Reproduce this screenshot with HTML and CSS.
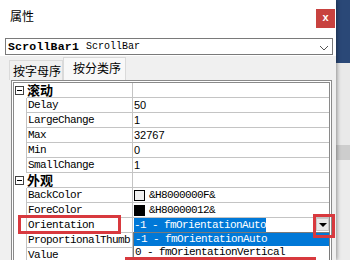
FILE: index.html
```html
<!DOCTYPE html>
<html lang="zh-CN">
<head>
	<meta charset="UTF-8">
	<title>属性</title>
	<link rel="stylesheet" href="styles.css">
</head>
<body>
	<div class="win">
		<div class="titlebar">
			<span class="title">属性</span>
			<span class="close">x</span>
		</div>
		<div class="objbar">
			<div class="combo">
				<b>ScrollBar1</b><span class="type">ScrollBar</span>
				<svg class="chev" width="10" height="6" viewBox="0 0 10 6"><path d="M1 1 L5 5 L9 1" fill="none" stroke="#555" stroke-width="1"/></svg>
			</div>
		</div>
		<div class="tabs">
			<div class="tab">按字母序</div>
			<div class="tab active">按分类序</div>
		</div>
		<!-- 属性列表 -->
		<div class="grid">
			<div class="row cat"><div class="mg"><span class="tog"></span></div><div class="nm">滚动</div><div class="vl"></div></div>
			<div class="row"><div class="mg"></div><div class="nm">Delay</div><div class="vl">50</div></div>
			<div class="row"><div class="mg"></div><div class="nm">LargeChange</div><div class="vl">1</div></div>
			<div class="row"><div class="mg"></div><div class="nm">Max</div><div class="vl">32767</div></div>
			<div class="row"><div class="mg"></div><div class="nm">Min</div><div class="vl">0</div></div>
			<div class="row"><div class="mg"></div><div class="nm">SmallChange</div><div class="vl">1</div></div>
			<div class="row cat"><div class="mg"><span class="tog"></span></div><div class="nm">外观</div><div class="vl"></div></div>
			<div class="row"><div class="mg"></div><div class="nm">BackColor</div><div class="vl mono"><span class="swatch"></span>&amp;H8000000F&amp;</div></div>
			<div class="row"><div class="mg"></div><div class="nm">ForeColor</div><div class="vl mono"><span class="swatch dark"></span>&amp;H80000012&amp;</div></div>
			<div class="row"><div class="mg"></div><div class="nm">Orientation</div>
				<div class="vl mono edit">
					<span class="sel">-1 - fmOrientationAuto</span>
					<span class="dropbtn"></span>
					<div class="droplist">
						<div class="item sel">-1 - fmOrientationAuto</div>
						<div class="item">0 - fmOrientationVertical</div>
						<div class="item">1 - fmOrientationHorizontal</div>
					</div>
				</div>
			</div>
			<div class="row"><div class="mg"></div><div class="nm">ProportionalThumb</div><div class="vl"></div></div>
			<div class="row"><div class="mg"></div><div class="nm">Value</div><div class="vl">0</div></div>
		</div>

		<!-- 标注框 -->
		<div class="mark mark-name"></div>
		<div class="mark mark-btn"></div>
		<div class="mark mark-item"></div>
	</div>
</body>
</html>
```

FILE: styles.css
```css
*{
	margin: 0;
	padding: 0;
	box-sizing: border-box;
}
body {
	width: 350px;
	height: 260px;
	overflow: hidden;
	background: linear-gradient(to bottom, #2a4877 0, #2a4877 63px, #e9e9e9 63px, #e9e9e9 145px, #cdcdcd 145px, #cdcdcd 160px, #ececec 160px);
	font-family: "Liberation Sans", "Noto Sans CJK SC", sans-serif;
	color: #000;
}
.win{
	position: relative;
	width: 336px;
	height: 260px;
	background: #f0f0f0;
	box-shadow: 1px 0 4px rgba(0,0,0,.4);
	overflow: hidden;
}
.titlebar{
	height: 32px;
	display: flex;
	align-items: flex-start;
	padding-left: 10px;
	background: #fff;
}
.title{
	margin-top: 8px;
	font-family: "Noto Sans CJK SC", sans-serif;
	font-size: 12px;
	line-height: 16px;
}
.close{
	margin: 9px 1px 0 auto;
	width: 19px;
	height: 19px;
	background: #c8423f;
	color: #fff;
	font-size: 11px;
	font-weight: bold;
	line-height: 17px;
	text-align: center;
}
.objbar{
	height: 24px;
	padding: 6px 3px 0 5px;
	background: #fff;
}
.combo{
	display: flex;
	align-items: center;
	height: 17px;
	border: 1px solid #7a7a7a;
	padding-left: 2px;
	font-family: "Liberation Mono", monospace;
	white-space: nowrap;
}
.combo b{
	font-size: 11.5px;
	letter-spacing: 0.2px;
}
.combo .type{
	margin-left: 7px;
	font-size: 10px;
}
.chev{
	margin: 2px 3px 0 auto;
}
.tabs{
	height: 24px;
	display: flex;
	align-items: flex-end;
	padding-left: 9px;
}
.tab{
	height: 20px;
	width: 54px;
	border: 1px solid #dadada;
	border-bottom: none;
	padding-left: 3px;
	font-family: "Noto Sans CJK SC", sans-serif;
	font-size: 12px;
	line-height: 19px;
	color: #000;
}
.tab.active{
	height: 23px;
	width: 63px;
	padding-left: 9px;
	background: #f8f8f8;
	line-height: 20px;
}
.grid{
	margin-left: 11px;
	width: 321px;
	height: 180px;
	border: 3px double #8a8a8a;
	border-bottom: none;
	background: #fff;
}
.row{
	display: flex;
	height: 15px;
}
.mg{
	width: 13px;
	border-right: 1px solid #c4c4c4;
	display: flex;
	align-items: center;
}
.nm{
	width: 106px;
	border-right: 1px solid #c4c4c4;
	border-bottom: 1px solid #c4c4c4;
	padding-left: 1px;
	font-family: "Liberation Mono", monospace;
	font-size: 11px;
	letter-spacing: -0.6px;
	line-height: 14px;
	white-space: nowrap;
}
.vl{
	position: relative;
	flex: 1;
	display: flex;
	align-items: center;
	border-bottom: 1px solid #c4c4c4;
	padding-left: 1px;
	font-size: 11px;
	line-height: 14px;
	white-space: nowrap;
}
.mono{
	font-family: "Liberation Mono", monospace;
	letter-spacing: -0.6px;
}
.cat .mg{
	border-right-color: transparent;
}
.cat .nm{
	padding-left: 0;
	font-family: "Noto Sans CJK SC", sans-serif;
	font-size: 13px;
	font-weight: bold;
	letter-spacing: 0;
}
.tog{
	position: relative;
	width: 9px;
	height: 9px;
	margin-left: 1px;
	border: 1px solid #404040;
	background: #fff;
}
.tog:after{
	content: "";
	position: absolute;
	left: 1px;
	top: 3px;
	width: 5px;
	height: 1px;
	background: #000;
}
.swatch{
	width: 11px;
	height: 11px;
	margin-right: 4px;
	border: 1px solid #000;
	background: #f0f0f0;
}
.swatch.dark{
	background: #000;
}
.edit{
	align-items: stretch;
	padding-left: 1px;
}
.sel{
	background: #0078d7;
	color: #fff;
}
.edit > .sel{
	line-height: 14px;
}
.dropbtn{
	position: relative;
	margin: 0 0 1px auto;
	width: 13px;
	background: #e9e9e9;
	border: 1px solid #c8c8c8;
}
.dropbtn:after{
	content: "";
	position: absolute;
	left: 2px;
	top: 4px;
	border-left: 4px solid transparent;
	border-right: 4px solid transparent;
	border-top: 4px solid #000;
}
.droplist{
	position: absolute;
	left: 0;
	top: 14px;
	width: 197px;
	background: #fff;
	border: 1px solid #7a7a7a;
	z-index: 2;
}
.item{
	height: 13px;
	line-height: 13px;
	padding-left: 1px;
}
.mark{
	position: absolute;
	border: 3px solid #d8393e;
	z-index: 5;
}
.mark-name{
	left: 18px;
	top: 215px;
	width: 103px;
	height: 19px;
}
.mark-btn{
	left: 313px;
	top: 214px;
	width: 22px;
	height: 24px;
}
.mark-item{
	left: 125px;
	top: 257px;
	width: 191px;
	height: 20px;
}
```
